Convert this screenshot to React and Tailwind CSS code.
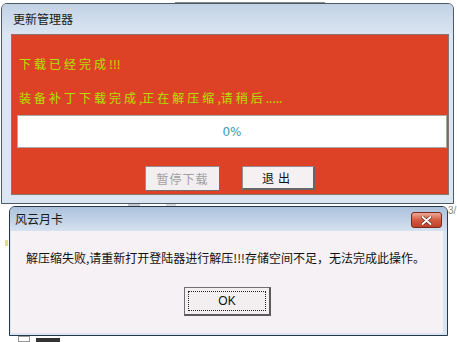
export default function App() {
  const cjk = { fontFamily: '"Noto Sans CJK SC", "Noto Sans", sans-serif' };
  return (
    <div className="relative w-[457px] h-[342px] bg-white overflow-hidden" style={cjk}>
      {/* background scraps */}
      <div className="absolute left-[175px] top-0 w-[150px] h-[3px] border-b border-[#888]" />
      <div className="absolute left-[128px] top-[203px] w-[12px] h-[5px] bg-[#c8c8c8]" />
      <div className="absolute left-[166px] top-[203px] w-[10px] h-[5px] bg-[#d8d8d8]" />
      <div className="absolute left-[448px] top-[205px] text-[10px] leading-[11px] text-[#888]" style={{ fontFamily: '"Liberation Sans", sans-serif' }}>3/</div>
      <div className="absolute left-[5px] top-[240px] w-[3px] h-[6px] bg-[#e8d890]" />
      <div className="absolute left-[18px] top-[336px] w-[12px] h-[6px] border border-[#999]" />
      <div className="absolute left-[36px] top-[338px] w-[24px] h-[4px] bg-[#333]" />

      {/* Update manager window */}
      <div className="absolute left-[1px] top-[3px] w-[453px] h-[201px] border border-[#4a5868] rounded-t-[6px] bg-[#dce6f2] flex flex-col">
        <div className="h-[30px] shrink-0 rounded-t-[5px] bg-gradient-to-b from-[#c2d2e5] to-[#dbe5f1] flex items-center pl-[11px] text-[12px] text-[#1a1a1a]">
          更新管理器
        </div>
        <div className="ml-[9px] w-[438px] h-[161px] bg-[#de4226] border border-[#8a7470] relative flex flex-col">
          <div className="pt-[21px] pl-[7px] text-[12px] leading-[16px] text-[#b2e000]">
            <span className="tracking-[3px]">下载已经完成</span>!!!
          </div>
          <div className="pt-[18px] pl-[7px] text-[12px] leading-[16px] text-[#b2e000]">
            <span className="tracking-[3px]">装备补丁下载完成</span>,<span className="tracking-[3px]">正在解压缩</span>,<span className="tracking-[3px]">请稍后</span>.....
          </div>
          <div className="mt-[9px] ml-[5px] w-[430px] h-[33px] bg-white border border-[#a8a8a8] flex items-center justify-center text-[12px] text-[#3a9aae]" style={{ fontFamily: '"DejaVu Sans", sans-serif' }}>
            0%
          </div>
          <div className="mt-[18px] flex">
            <div className="ml-[133px] w-[75px] h-[25px] bg-[#f3eef0] border border-[#9a8c8e] border-r-[#7a6a6a] border-b-[#7a6a6a] flex items-center justify-center text-[12px] text-[#a0a0a0] tracking-[1px]">
              暂停下载
            </div>
            <div className="ml-[22px] w-[73px] h-[24px] bg-[#f5f1f3] border border-[#9a8c8e] border-r-[#666] border-b-[#666] border-r-2 border-b-2 flex items-center justify-center text-[12px] text-[#111] tracking-[4px]">
              退出
            </div>
          </div>
        </div>
      </div>

      {/* Message box */}
      <div className="absolute left-[9px] top-[206px] w-[439px] h-[130px] border border-[#26384c] rounded-t-[6px] bg-[#d8e4f1] flex flex-col">
        <div className="h-[24px] shrink-0 rounded-t-[5px] bg-gradient-to-b from-[#abc1dc] to-[#d6e2f0] relative flex items-center pl-[5px] text-[12px] text-[#1a1a1a]">
          风云月卡
          <div className="absolute left-[401px] top-[5px] w-[31px] h-[16px] rounded-[3px] border border-[#7a2a1e] bg-gradient-to-b from-[#e9a996] via-[#d35a40] to-[#c0412a] flex items-center justify-center">
            <svg width="11" height="9" viewBox="0 0 11 9">
              <path d="M1.5 1 L9.5 8 M9.5 1 L1.5 8" stroke="#5a1a10" strokeWidth="3.2" strokeLinecap="round" />
              <path d="M1.5 1 L9.5 8 M9.5 1 L1.5 8" stroke="#ffffff" strokeWidth="2" strokeLinecap="round" />
            </svg>
          </div>
        </div>
        <div className="ml-[1px] mr-[4px] mb-[2px] flex-1 bg-[#f6f1f4] flex flex-col">
          <div className="pt-[19px] pl-[15px] text-[12px] leading-[16px] text-[#111] whitespace-nowrap">
            解压缩失败,请重新打开登陆器进行解压!!!存储空间不足，无法完成此操作。
          </div>
          <div className="mt-[21px] ml-[173px] w-[87px] h-[29px] bg-[#f3eff1] border border-[#707070] border-r-2 border-b-2 border-r-[#5a5a5a] border-b-[#5a5a5a] p-[3px]">
            <div className="w-full h-full border border-dotted border-[#222] flex items-center justify-center text-[12px] text-[#111]" style={{ fontFamily: '"Liberation Sans", sans-serif' }}>
              OK
            </div>
          </div>
        </div>
      </div>
    </div>
  );
}
